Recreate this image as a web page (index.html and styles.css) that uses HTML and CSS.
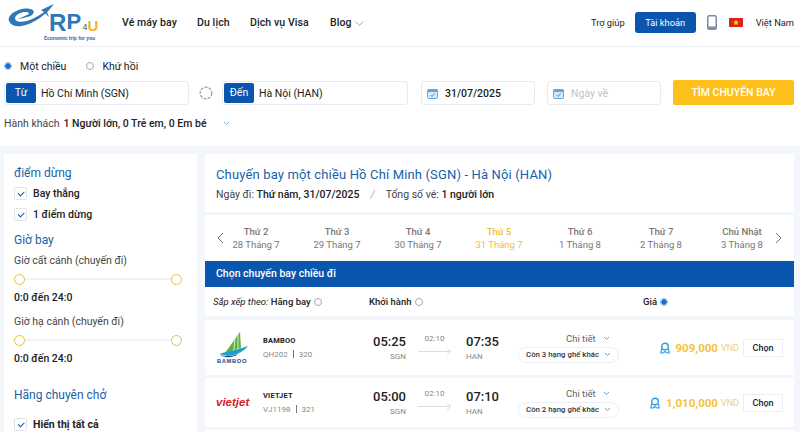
FILE: index.html
```html
<html>

<head>
<meta charset="utf-8">
<link rel="stylesheet" href="styles.css">
</head>

<body>

<header class="topbar">
    <a class="logo">
        <svg width="92" height="42" viewBox="0 0 92 42">
            <path d="M3 20 C 1 13, 13 7, 22 7.500 C 29 8, 30 13, 23 15.500 L 11 18.500 L 21 14 C 25 12, 22 10.500, 18 11 C 12 12, 7 16, 10 19.500 C 16 24, 33 17, 47 4 C 36 20, 9 33, 3 20 Z" fill="#2f78b7"/>
            <path d="M35 9 L 48 3 L 41 11 L 43 16 L 38 11 Z" fill="#2f78b7"/>
            <text class="logo-r" x="43" y="30">R</text>
            <text class="logo-p" x="60.500" y="28">P</text>
            <text class="logo-4" x="76.500" y="29">4</text>
            <text class="logo-u" x="81.500" y="30">U</text>
            <text class="logo-tag" x="38" y="39">Economic trip for you</text>
        </svg>
    </a>
    <nav class="main-nav">
        <a>Vé máy bay</a>
        <a>Du lịch</a>
        <a>Dịch vụ Visa</a>
        <a class="nav-blog">Blog
            <svg width="9" height="5" viewBox="0 0 9 5"><path d="M.5.5l4 3.800 4-3.800" fill="none" stroke="#8a94a0" stroke-width=".8"/></svg>
        </a>
    </nav>
    <div class="top-right">
        <a class="help">Trợ giúp</a>
        <a class="btn-account">Tài khoản</a>
        <svg class="phone" width="10" height="15" viewBox="0 0 10 15"><rect x=".75" y=".75" width="8.500" height="13.500" rx="1.500" fill="none" stroke="#7d8da3" stroke-width="1.500"/><rect x="1" y="11.500" width="8" height="2.500" fill="#7d8da3"/></svg>
        <svg class="flag" width="14" height="9" viewBox="0 0 14 9"><rect width="14" height="9" fill="#da251d"/><path d="M7 1.500l.8 2.100 2.200.1-1.700 1.400.6 2.200L7 6.100 5.100 7.300l.6-2.200L4 3.700l2.200-.1z" fill="#ffdd00"/></svg>
        <span class="lang">Việt Nam</span>
    </div>
</header>

<section class="search">
    <div class="trip-type">
        <label><span class="radio checked"></span>Một chiều</label>
        <label><span class="radio"></span>Khứ hồi</label>
    </div>
    <div class="search-row">
        <div class="field field-place field-from"><span class="field-tag">Từ</span><span class="field-value">Hồ Chí Minh (SGN)</span></div>
        <svg class="swap" width="14" height="14" viewBox="0 0 14 14"><circle cx="7" cy="7" r="5.800" fill="none" stroke="#9aa1a8" stroke-width="1.300" stroke-dasharray="3 1.200"/></svg>
        <div class="field field-place field-to"><span class="field-tag">Đến</span><span class="field-value">Hà Nội (HAN)</span></div>
        <div class="field field-date field-depart">
            <svg width="11" height="11" viewBox="0 0 11 11"><rect x=".5" y="1.500" width="10" height="9" rx="1" fill="#d5e9f9" stroke="#5aa9e6"/><rect x=".5" y="1.500" width="10" height="2.500" fill="#5aa9e6"/><path d="M3.500 7l1.500 1.500 2.500-3" fill="none" stroke="#2f78b7" stroke-width=".8"/></svg>
            <span class="date-value">31/07/2025</span>
        </div>
        <div class="field field-date field-return">
            <svg width="11" height="11" viewBox="0 0 11 11"><rect x=".5" y="1.500" width="10" height="9" rx="1" fill="#d5e9f9" stroke="#5aa9e6"/><rect x=".5" y="1.500" width="10" height="2.500" fill="#5aa9e6"/><path d="M3.500 7l1.500 1.500 2.500-3" fill="none" stroke="#2f78b7" stroke-width=".8"/></svg>
            <span class="date-empty">Ngày về</span>
        </div>
        <a class="btn-search">TÌM CHUYẾN BAY</a>
    </div>
    <div class="passengers">
        <span>Hành khách</span>
        <b>1 Người lớn, 0 Trẻ em, 0 Em bé</b>
        <svg width="7" height="5" viewBox="0 0 7 5"><path d="M1 1l2.500 2.500L6 1" fill="none" stroke="#7fb2da" stroke-width="1"/></svg>
    </div>
</section>

<div class="content">
    <aside class="filters">
        <h3>điểm dừng</h3>
        <label class="check"><span class="box"></span>Bay thẳng</label>
        <label class="check"><span class="box"></span>1 điểm dừng</label>
        <h3 class="h-time">Giờ bay</h3>
        <p class="range-label">Giờ cất cánh (chuyến đi)</p>
        <div class="slider"><span class="knob"></span><span class="knob"></span></div>
        <p class="range-value">0:0 đến 24:0</p>
        <p class="range-label range-second">Giờ hạ cánh (chuyến đi)</p>
        <div class="slider"><span class="knob"></span><span class="knob"></span></div>
        <p class="range-value">0:0 đến 24:0</p>
        <h3 class="h-airline">Hãng chuyên chở</h3>
        <label class="check check-all"><span class="box"></span>Hiển thị tất cả</label>
    </aside>

    <main class="results">
        <div class="summary">
            <h2>Chuyến bay một chiều Hồ Chí Minh (SGN) - Hà Nội (HAN)</h2>
            <p>Ngày đi: <b>Thứ năm, 31/07/2025</b><i>/</i>Tổng số vé: <b>1 người lớn</b></p>
        </div>

        <div class="dates">
            <svg class="arrow-prev" width="7" height="12" viewBox="0 0 7 12"><path d="M6 1L1 6l5 5" fill="none" stroke="#777" stroke-width="1"/></svg>
            <div class="day"><b>Thứ 2</b><span>28 Tháng 7</span></div>
            <div class="day"><b>Thứ 3</b><span>29 Tháng 7</span></div>
            <div class="day"><b>Thứ 4</b><span>30 Tháng 7</span></div>
            <div class="day active"><b>Thứ 5</b><span>31 Tháng 7</span></div>
            <div class="day"><b>Thứ 6</b><span>1 Tháng 8</span></div>
            <div class="day"><b>Thứ 7</b><span>2 Tháng 8</span></div>
            <div class="day"><b>Chủ Nhật</b><span>3 Tháng 8</span></div>
            <svg class="arrow-next" width="7" height="12" viewBox="0 0 7 12"><path d="M1 1l5 5-5 5" fill="none" stroke="#777" stroke-width="1"/></svg>
        </div>

        <div class="bar-title">Chọn chuyến bay chiều đi</div>

        <div class="sort">
            <div class="sort-airline"><i>Sắp xếp theo:</i> <b>Hãng bay</b><span class="radio small"></span></div>
            <div class="sort-time"><b>Khởi hành</b><span class="radio small"></span></div>
            <div class="sort-price"><b>Giá</b><span class="radio small checked"></span></div>
        </div>

        <div class="flight">
            <svg class="airline-logo" width="36" height="34" viewBox="0 0 36 34">
                <path d="M24 1 L 25 17 L 9 22 Z" fill="#5bb04a"/>
                <path d="M19 7 L 18 19 M 22 3 L 22 18" stroke="#c5e4a8" stroke-width="1.200"/>
                <path d="M3 23 C 12 20, 22 19, 32 15 C 28 20, 22 24, 12 25 Z" fill="#1f9dc4"/>
                <path d="M4 24 C 10 26, 18 25, 22 23 C 18 27, 8 27, 4 24 Z" fill="#0d4a8c"/>
                <text class="bamboo-word" x="1" y="32">BAMBOO</text>
            </svg>
            <div class="airline">
                <b>BAMBOO</b>
                <span>QH202<i></i>320</span>
            </div>
            <div class="time time-from"><b>05:25</b><span>SGN</span></div>
            <div class="duration">
                <span>02:10</span>
                <svg width="34" height="7" viewBox="0 0 34 7"><path d="M0 3.500h33M29 .5l4 3-4 3" fill="none" stroke="#d9dde2" stroke-width="1"/></svg>
            </div>
            <div class="time time-to"><b>07:35</b><span>HAN</span></div>
            <div class="detail">
                <a class="detail-link">Chi tiết <svg width="7" height="5" viewBox="0 0 7 5"><path d="M1 1l2.500 2.500L6 1" fill="none" stroke="#5aa9e6" stroke-width="1"/></svg></a>
                <a class="seat-pill">Còn 3 hạng ghế khác <svg width="7" height="5" viewBox="0 0 7 5"><path d="M1 1l2.500 2.500L6 1" fill="none" stroke="#5aa9e6" stroke-width="1"/></svg></a>
            </div>
            <div class="price">
                <svg width="10" height="12" viewBox="0 0 10 12"><circle cx="5" cy="4.500" r="3.300" fill="none" stroke="#2e9be6" stroke-width="1.400"/><path d="M1.500 7L.8 11h2.200L5 9.500 7 11h2.200L8.500 7" fill="none" stroke="#2e9be6" stroke-width="1.200"/></svg>
                <b>909,000</b><span>VND</span>
            </div>
            <a class="btn-choose">Chọn</a>
        </div>

        <div class="flight flight-short">
            <svg class="airline-logo" width="36" height="34" viewBox="0 0 36 34">
                <text class="vietjet-word" x="0" y="20">vietjet</text>
            </svg>
            <div class="airline">
                <b>VIETJET</b>
                <span>VJ1198<i></i>321</span>
            </div>
            <div class="time time-from"><b>05:00</b><span>SGN</span></div>
            <div class="duration">
                <span>02:10</span>
                <svg width="34" height="7" viewBox="0 0 34 7"><path d="M0 3.500h33M29 .5l4 3-4 3" fill="none" stroke="#d9dde2" stroke-width="1"/></svg>
            </div>
            <div class="time time-to"><b>07:10</b><span>HAN</span></div>
            <div class="detail">
                <a class="detail-link">Chi tiết <svg width="7" height="5" viewBox="0 0 7 5"><path d="M1 1l2.500 2.500L6 1" fill="none" stroke="#5aa9e6" stroke-width="1"/></svg></a>
                <a class="seat-pill">Còn 2 hạng ghế khác <svg width="7" height="5" viewBox="0 0 7 5"><path d="M1 1l2.500 2.500L6 1" fill="none" stroke="#5aa9e6" stroke-width="1"/></svg></a>
            </div>
            <div class="price">
                <svg width="10" height="12" viewBox="0 0 10 12"><circle cx="5" cy="4.500" r="3.300" fill="none" stroke="#2e9be6" stroke-width="1.400"/><path d="M1.500 7L.8 11h2.200L5 9.500 7 11h2.200L8.500 7" fill="none" stroke="#2e9be6" stroke-width="1.200"/></svg>
                <b>1,010,000</b><span>VND</span>
            </div>
            <a class="btn-choose">Chọn</a>
        </div>

        <div class="flight flight-next"></div>
    </main>
</div>

</body>

</html>
```

FILE: styles.css
```css
html {
    background: #f3f6fb;
}

body {
    margin: 0;
    height: 432px;
    overflow: hidden;
    font-family: Roboto, "Noto Sans", sans-serif;
    font-size: 10.500px;
    color: #222;
}

p, h2, h3 {
    margin: 0;
    font-weight: 400;
}

/* top bar */
.topbar {
    display: flex;
    align-items: center;
    box-sizing: border-box;
    height: 47px;
    padding: 0 6px 2px 6px;
    background: #fff;
    border-bottom: 1px solid #eceff3;
}

.logo {
    display: block;
    width: 92px;
    height: 42px;
}

.logo-r { font: 700 24px "Liberation Sans", sans-serif; fill: #2f78b7; }
.logo-p { font: 700 22px "Liberation Sans", sans-serif; fill: #2f78b7; }
.logo-4 { font: 400 9px "Liberation Sans", sans-serif; fill: #555; }
.logo-u { font: 700 15px "Liberation Sans", sans-serif; fill: #f2b51d; }
.logo-tag { font: 700 5.300px Roboto, sans-serif; fill: #2f78b7; }

.main-nav {
    display: flex;
    margin-left: 24px;
    font-size: 10.500px;
    font-weight: 500;
    letter-spacing: 0.1px;
}

.main-nav a:nth-child(1) { width: 75px; }
.main-nav a:nth-child(2) { width: 53px; }
.main-nav a:nth-child(3) { width: 80px; }

.nav-blog svg {
    margin-left: 1px;
}

.top-right {
    display: flex;
    align-items: center;
    margin-left: auto;
    font-size: 9.300px;
}

.help {
    margin-right: 10px;
}

.btn-account {
    width: 61px;
    height: 21px;
    line-height: 21px;
    text-align: center;
    background: #0a55ad;
    color: #fff;
    border-radius: 3px;
}

.phone {
    margin-left: 11px;
}

.flag {
    margin-left: 12px;
}

.lang {
    margin-left: 13px;
}

/* search */
.search {
    box-sizing: border-box;
    height: 99px;
    padding: 10px 6px 0 4px;
    background: #fff;
}

.trip-type {
    display: flex;
    gap: 20px;
    height: 18px;
    align-items: center;
}

.trip-type label {
    display: flex;
    align-items: center;
    gap: 8px;
}

.radio {
    display: inline-block;
    box-sizing: border-box;
    width: 8px;
    height: 8px;
    border: 1px solid #aaa;
    border-radius: 50%;
}

.radio.checked {
    border-color: #7fb8ea;
    background: radial-gradient(circle, #1a6fc9 0 2.500px, #fff 3px);
}

.search-row {
    display: flex;
    align-items: center;
    margin-top: 6px;
}

.field {
    display: flex;
    align-items: center;
    box-sizing: border-box;
    height: 24px;
    background: #fff;
    border: 1px solid #e8ebef;
    border-radius: 3px;
}

.field-place {
    padding-left: 1px;
}

.field-from { width: 185px; }
.field-to { width: 186px; }

.field-tag {
    width: 30px;
    height: 20px;
    line-height: 20px;
    text-align: center;
    background: #0a55ad;
    color: #fff;
    border-radius: 2px;
}

.field-value {
    margin-left: 5px;
}

.swap {
    margin: 0 9px 0 10px;
}

.field-date {
    padding-left: 5px;
    gap: 7px;
}

.field-depart {
    width: 114px;
    margin-left: 13px;
}

.field-return {
    width: 114px;
    margin-left: 12px;
}

.date-value {
    font-weight: 500;
}

.date-empty {
    color: #bfc4ca;
}

.btn-search {
    width: 121px;
    height: 25px;
    line-height: 25px;
    margin: -2px 0 0 12px;
    text-align: center;
    background: #fdc01a;
    color: #fff;
    border-radius: 2px;
    font-weight: 500;
}

.passengers {
    display: flex;
    align-items: center;
    margin-top: 12px;
    color: #444;
}

.passengers b {
    margin-left: 4px;
    font-weight: 500;
    color: #222;
}

.passengers svg {
    margin-left: 16px;
}

/* two columns */
.content {
    display: flex;
    gap: 8px;
    padding: 8px 6px 0 4px;
}

.filters {
    box-sizing: border-box;
    width: 193px;
    height: 278px;
    padding: 11px 10px 0 10px;
    background: #fff;
}

.filters h3 {
    font-size: 12px;
    line-height: 16px;
    color: #185fa8;
}

.check {
    display: flex;
    align-items: center;
    gap: 6px;
    height: 21px;
    font-weight: 500;
}

.filters h3 + .check {
    margin-top: 2px;
}

.box {
    display: block;
    box-sizing: border-box;
    width: 13px;
    height: 13px;
    border: 1px solid #dfe3e8;
    border-radius: 2px;
    position: relative;
}

.box::after {
    content: "";
    position: absolute;
    left: 3px;
    top: 2.500px;
    width: 5px;
    height: 2.500px;
    border-left: 1.500px solid #0a55ad;
    border-bottom: 1.500px solid #0a55ad;
    transform: rotate(-45deg);
}

.h-time {
    margin-top: 7px;
}

.range-label {
    margin-top: 6px;
    line-height: 14px;
    color: #444;
}

.range-second {
    margin-top: 10px;
}

.slider {
    display: flex;
    justify-content: space-between;
    align-items: center;
    width: 168px;
    height: 12px;
    margin: 5px 0 0 0;
    background: linear-gradient(#f1f2f4, #f1f2f4) center / 100% 2px no-repeat;
}

.knob {
    box-sizing: border-box;
    width: 11px;
    height: 11px;
    border: 1.200px solid #e8bf3c;
    border-radius: 50%;
    background: #fff;
}

.range-value {
    margin-top: 6px;
    line-height: 14px;
    font-weight: 500;
}

.h-airline {
    margin-top: 21px;
}

.filters h3 + .check-all {
    margin-top: 11px;
    font-weight: 700;
}

.results {
    flex: 1;
    min-width: 0;
}

.summary {
    height: 58px;
    padding: 12px 0 0 11px;
    box-sizing: border-box;
    background: #fff;
}

.summary h2 {
    font-size: 13px;
    line-height: 17px;
    color: #185fa8;
    letter-spacing: 0.15px;
}

.summary p {
    margin-top: 5px;
    line-height: 14px;
    color: #444;
}

.summary b {
    font-weight: 500;
    color: #222;
}

.summary i {
    margin: 0 11px;
    color: #aaa;
}

/* date strip */
.dates {
    display: flex;
    align-items: center;
    height: 46px;
    margin-top: 3px;
    padding: 0 11px 0 12px;
    background: #fff;
    box-sizing: border-box;
}

.arrow-prev {
    flex: none;
    margin-right: -8.500px;
}

.arrow-next {
    flex: none;
    margin-left: -8px;
}

.day {
    flex: none;
    width: 81px;
    text-align: center;
    font-size: 9.500px;
    line-height: 13px;
    color: #777;
}

.day b {
    display: block;
    font-weight: 500;
}

.day.active {
    color: #f0c030;
}

.bar-title {
    height: 26px;
    line-height: 26px;
    padding-left: 11px;
    background: #0a55ad;
    color: #fff;
    font-weight: 500;
}

.sort {
    display: flex;
    align-items: center;
    height: 29px;
    background: #fff;
    padding-left: 8px;
    font-size: 9.500px;
}

.sort b {
    font-weight: 500;
}

.sort .radio {
    margin-left: 3px;
    vertical-align: -1px;
}

.sort-airline { width: 156px; }
.sort-time { width: 274px; }

/* flight rows */
.flight {
    display: flex;
    align-items: center;
    height: 55px;
    margin-top: 3px;
    padding-left: 11px;
    background: #fff;
}

.sort + .flight {
    margin-top: 4px;
}

.flight-short {
    height: 49px;
}

.flight-next {
    height: 2px;
}

.airline-logo {
    flex: none;
}

.bamboo-word { font: 700 5.800px "Liberation Sans", sans-serif; fill: #0d4a8c; letter-spacing: .6px; }
.vietjet-word { font: italic 700 11.500px "Liberation Sans", sans-serif; fill: #d8202a; }

.airline {
    width: 105px;
    margin-left: 11px;
}

.airline b {
    display: block;
    font-size: 7.500px;
    font-weight: 700;
    line-height: 12px;
    letter-spacing: .2px;
}

.airline span {
    display: block;
    margin-top: 3px;
    font-size: 8px;
    color: #888;
    line-height: 10px;
}

.airline i {
    display: inline-block;
    width: 1px;
    height: 8px;
    margin: 0 5px;
    background: #777;
    vertical-align: -1px;
}

.time {
    width: 40px;
    font-size: 8px;
    color: #888;
}

.time b {
    display: block;
    font-size: 13px;
    line-height: 16px;
    font-weight: 500;
    color: #222;
}

.time span {
    display: block;
    margin-top: 2px;
}

.time-from {
    width: 38px;
    text-align: right;
}

.duration {
    width: 60px;
    padding: 0 3px 7px 0;
    box-sizing: border-box;
    font-size: 8px;
    color: #888;
    text-align: center;
}

.duration span {
    display: block;
    margin-bottom: 5px;
}

.duration svg {
    display: block;
    margin: 0 auto;
}

.detail {
    display: flex;
    flex-direction: column;
    align-items: flex-end;
    width: 101px;
    margin-left: 12px;
    font-size: 9.500px;
}

.detail-link {
    margin-right: 9px;
    color: #666;
    line-height: 14px;
}

.detail-link svg {
    margin-left: 5px;
    vertical-align: 1px;
}

.seat-pill {
    box-sizing: border-box;
    width: 100%;
    height: 16px;
    line-height: 14px;
    margin-top: 1px;
    text-align: center;
    font-size: 7.800px;
    font-weight: 500;
    border: 1px solid #eceff3;
    border-radius: 8px;
    color: #333;
}

.seat-pill svg {
    margin-left: 3px;
}

.price {
    display: flex;
    align-items: center;
    justify-content: flex-end;
    width: 120px;
    gap: 6px;
}

.price b {
    font-size: 11.500px;
    font-weight: 700;
    color: #f5c33b;
}

.price span {
    margin-left: -3px;
    font-size: 9px;
    color: #f2cf70;
}

.btn-choose {
    width: 38px;
    height: 16px;
    line-height: 16px;
    margin-left: 4px;
    text-align: center;
    font-size: 9px;
    font-weight: 500;
    border: 1px solid #eceff3;
}
```
